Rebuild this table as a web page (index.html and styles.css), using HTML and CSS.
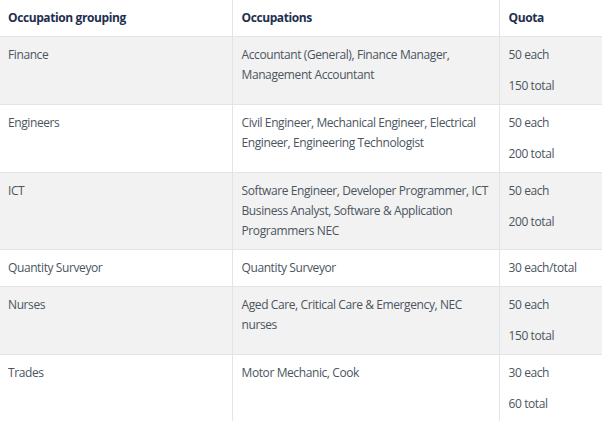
FILE: index.html
```html
<!DOCTYPE html>
<html>
<head>
<meta charset="utf-8">
<link rel="stylesheet" href="styles.css">
</head>
<body>
<table class="quota-table">
  <colgroup>
    <col class="c1"><col class="c2"><col class="c3">
  </colgroup>
  <thead>
    <tr><th>Occupation grouping</th><th>Occupations</th><th>Quota</th></tr>
  </thead>
  <tbody>
    <tr class="alt">
      <td>Finance</td>
      <td>Accountant (General), Finance Manager, Management Accountant</td>
      <td><p>50 each</p><p>150 total</p></td>
    </tr>
    <tr>
      <td>Engineers</td>
      <td>Civil Engineer, Mechanical Engineer, Electrical Engineer, Engineering Technologist</td>
      <td><p>50 each</p><p>200 total</p></td>
    </tr>
    <tr class="alt">
      <td>ICT</td>
      <td>Software Engineer, Developer Programmer, ICT Business Analyst, Software &amp; Application Programmers NEC</td>
      <td><p>50 each</p><p>200 total</p></td>
    </tr>
    <tr>
      <td>Quantity Surveyor</td>
      <td>Quantity Surveyor</td>
      <td><p>30 each/total</p></td>
    </tr>
    <tr class="alt">
      <td>Nurses</td>
      <td>Aged Care, Critical Care &amp; Emergency, NEC nurses</td>
      <td><p>50 each</p><p>150 total</p></td>
    </tr>
    <tr>
      <td>Trades</td>
      <td>Motor Mechanic, Cook</td>
      <td><p>30 each</p><p>60 total</p></td>
    </tr>
  </tbody>
</table>
</body>
</html>
```
FILE: styles.css
```css
html, body {
  margin: 0;
  padding: 0;
  background: #ffffff;
}
body {
  font-family: "Open Sans", "Noto Sans", sans-serif;
  font-size: 12px;
  letter-spacing: -0.4px;
  line-height: 20px;
  color: #4b5560;
}
.quota-table {
  border-collapse: collapse;
  width: 609px;
  table-layout: fixed;
}
.c1 { width: 232px; }
.c2 { width: 267px; }
.c3 { width: 110px; }
.quota-table th,
.quota-table td {
  text-align: left;
  vertical-align: top;
  padding: 8px 8px 8px 9px;
  border-top: 1px solid #e1e5ea;
  border-bottom: 1px solid #e1e5ea;
  border-left: 1px solid #e1e5ea;
}
.quota-table th:first-child,
.quota-table td:first-child {
  border-left: none;
  padding-left: 8px;
}
.quota-table thead th {
  border-top: none;
  font-weight: 700;
  color: #1e2f4e;
}
.quota-table tr.alt td {
  background: #f2f2f2;
}
.quota-table p {
  margin: 0;
}
.quota-table p + p {
  margin-top: 11px;
}
```
